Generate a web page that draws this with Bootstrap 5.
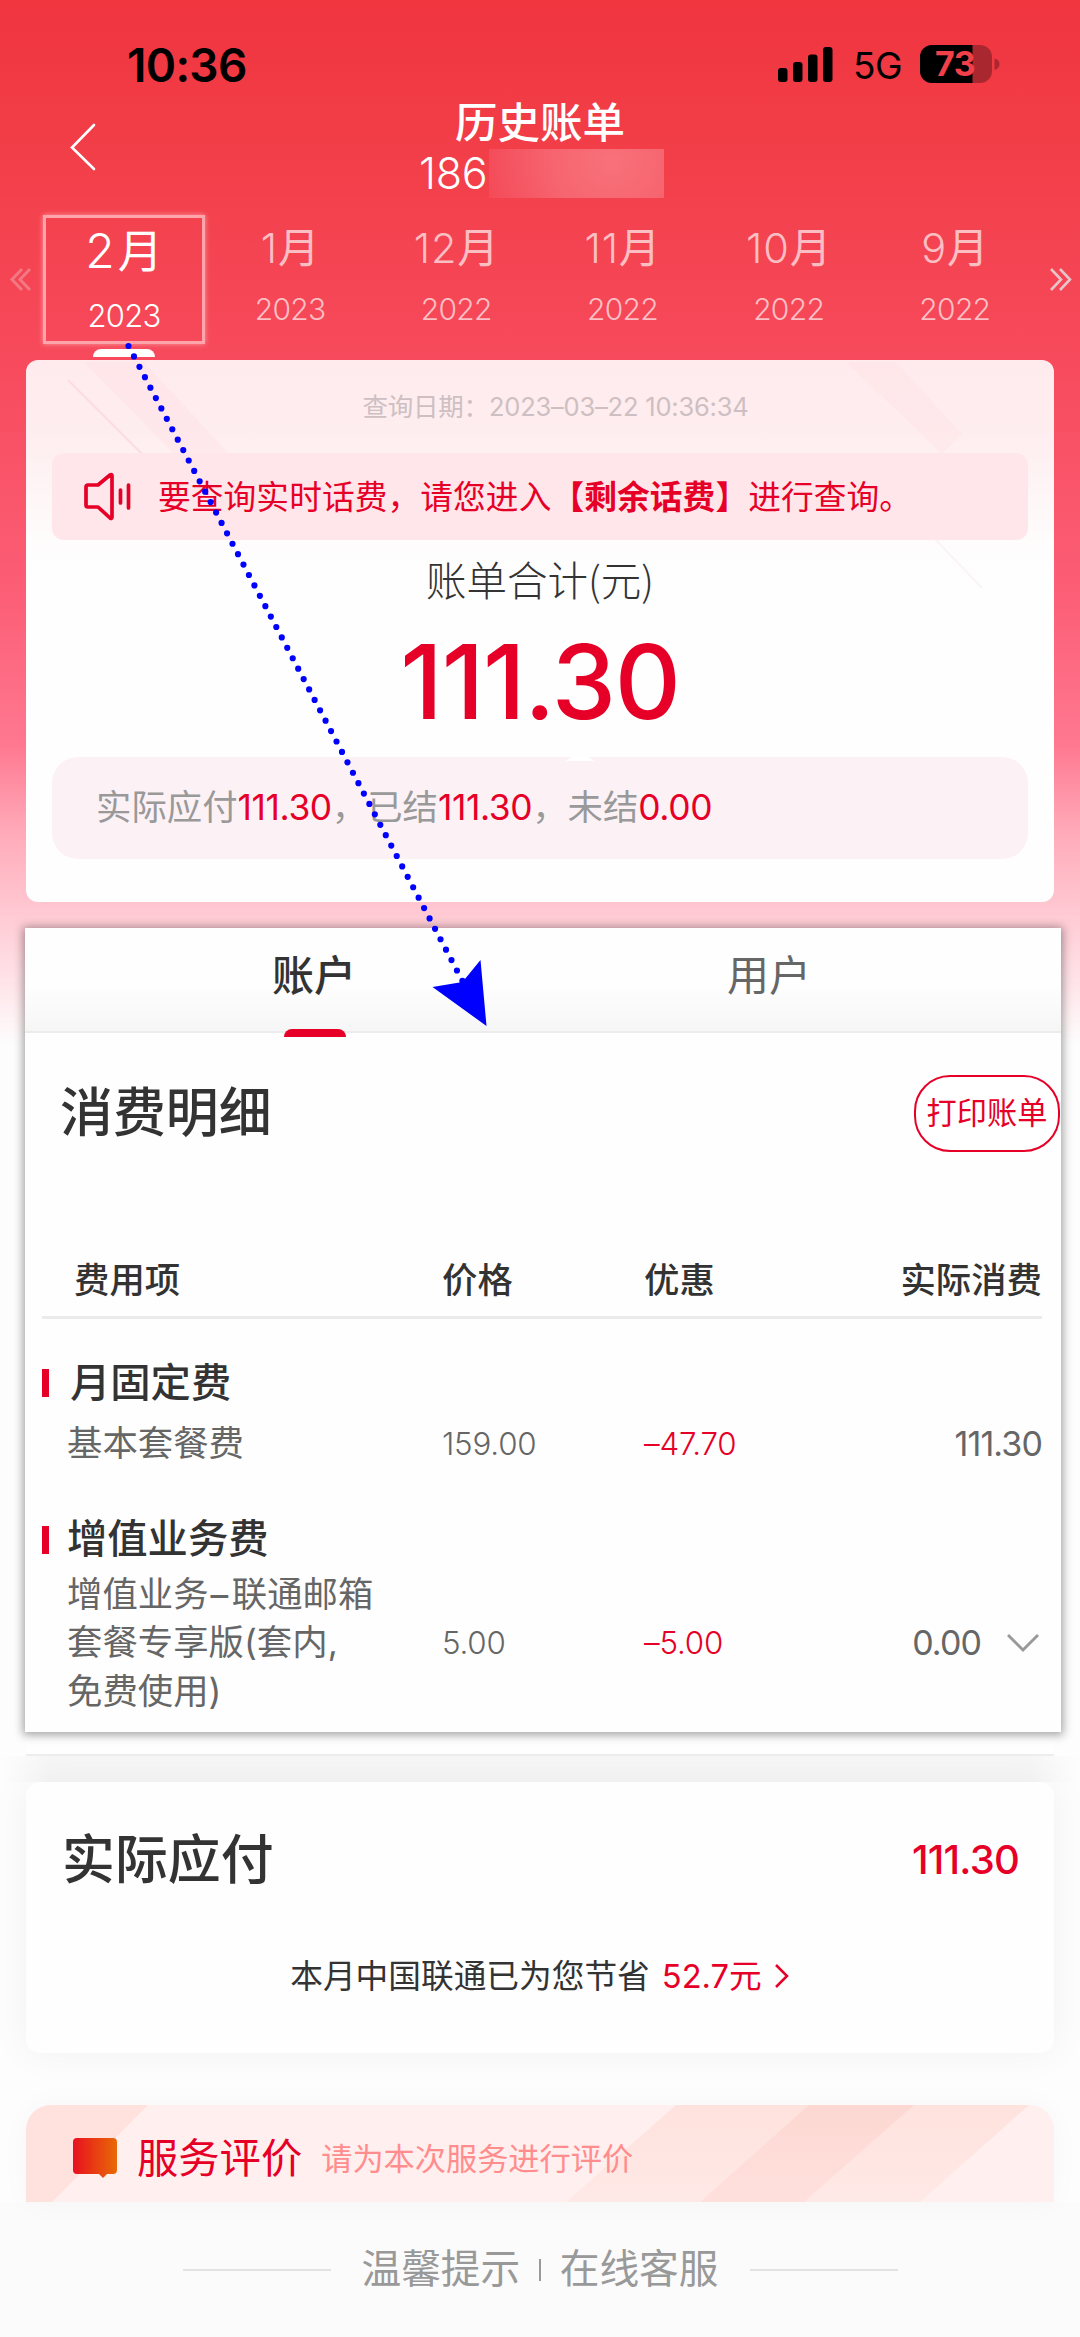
<!DOCTYPE html>
<html lang="zh-CN">
<head>
<meta charset="utf-8">
<meta name="viewport" content="width=device-width, initial-scale=1">
<title>历史账单</title>
<link href="https://cdn.jsdelivr.net/npm/bootstrap@5.3.0/dist/css/bootstrap.min.css" rel="stylesheet">
<style>
:root{--brand:#e60027;--ink:#333;--soft:#666}
body{font-family:Inter,"Noto Sans CJK SC",sans-serif;color:var(--ink);background:#fdfdfd;line-height:1}
.screen{width:1080px;height:2337px;background:linear-gradient(180deg,#f0353f 0,#f23e48 150px,#f74a5c 360px,#fc5f77 600px,#fe7890 745px,#ffa9b8 830px,#ffc8d2 910px,#ffdfe5 970px,#fdfdfd 1045px)}
.cjk{font-family:"Noto Sans CJK SC",sans-serif}
.num{font-family:Inter,sans-serif}
.fw-m{font-weight:500}
.red{color:var(--brand)}
.status{height:92px;padding:0 80px 0 127px;color:#000}
.clock{font-size:46px;font-weight:600;letter-spacing:-.7px;padding-top:42px}
.status-icons{padding-top:37px}
.net{font-size:37px;letter-spacing:-.5px;padding:2px 18px 0 19px}
.titlebar{height:110px;color:#fff}
.page-title{font-size:42.5px;height:57px;line-height:55px}
.back{left:68px;top:30px}
.phone{height:49px;font-size:43px;font-weight:300;padding-left:419px;letter-spacing:-.2px}
.phone-prefix{width:70px;white-space:nowrap}
.mask{width:175px;height:49px;background:radial-gradient(circle at 70% 25%,#f8717a 0,#f66570 45%,#f44a58 100%)}
.months{height:158px;padding:0 41px;color:rgba(255,255,255,.66)}
.month{width:166.2px}
.month .m-name{font-size:41.500px;height:42px;line-height:42px;margin-top:22px;font-family:"Noto Sans CJK SC",sans-serif}
.month .m-name span{font-family:Inter,sans-serif;font-weight:300;letter-spacing:.8px}
.month .m-year{font-size:30px;height:30px;line-height:30px;margin-top:28px;letter-spacing:-.7px;font-weight:300}
.month.active{width:162px;height:129px;margin:13px 2px 0 2px;color:#fff;border:3px solid #fda5ab;box-shadow:0 0 5px #ff9aa2}
.month.active .m-name{font-size:45px;margin-top:10px}
.month.active .m-name span{font-size:48px;letter-spacing:3px;font-weight:300}
.month.active .m-year{margin-top:31px;font-size:31px}
.prev-more{left:9px;top:65px}
.next-more{left:1048px;top:65px}
.mark-tab{left:93px;top:147px;width:62px;height:8px;border-radius:8px 8px 0 0;background:#fff}
.sum{margin:0 26px;height:542px;border-radius:12px;background:linear-gradient(180deg,#ffebed 0,#feedef 70px,#fefdfd 190px,#fefefe 230px);overflow:hidden}
.date{font-size:25.5px;color:#cdbfc2;height:93px;line-height:93px;letter-spacing:-.2px;padding-left:31px}
.notice{margin:0 26px;height:87px;border-radius:12px;background:#ffe6ea;font-size:32.7px;padding-left:31px}
.notice .cjk{margin:-3px 0 0 25px;letter-spacing:.1px}
.lbl{font-size:40.5px;height:44px;line-height:44px;margin-top:17px;font-weight:300}
.total{font-size:102.5px;height:103px;line-height:103px;margin-top:30px;font-weight:500;letter-spacing:-1.2px}
.pill{margin:23px 26px 0;height:102px;border-radius:26px;background:#fcf2f6;padding-left:44px;font-size:35.4px;color:#999}
.pill .red{letter-spacing:-.4px}
.notch{left:514px;top:0;width:28px;height:4px;background:#fff;clip-path:polygon(20% 0,80% 0,100% 100%,0 100%)}
.detail{margin:26px 19px 0 25px;height:804px;background:#fefefe;box-shadow:0 1px 9px 2px rgba(0,0,0,.36)}
.tabs{height:105px;background:linear-gradient(180deg,#fefefe 55%,#f6f6f6 100%);border-bottom:2px solid #ececec;font-size:42px;color:var(--soft)}
.tabs>div{padding-top:27px}
.tab-a{margin-left:247px;width:455px;color:var(--ink)}
.tab-line{left:259px;top:101px;width:62px;height:8px;border-radius:8px 8px 0 0;background:var(--brand)}
.h-big{font-size:52.9px;font-weight:500}
.detail-head{height:161px;padding:0 1px 0 35px;margin-bottom:57px}
.btn-print,.btn-print:hover{width:146px;height:77px;border:2.5px solid var(--brand);border-radius:36px;color:var(--brand);font-size:30.2px;padding:0;background:#fff;white-space:nowrap}
.grid4{display:grid;grid-template-columns:400px 202px 1fr auto;align-items:center}
.thead-row{margin:0 19px 0 17px;height:68px;border-bottom:3px solid #ebebeb;font-size:35.4px;font-weight:500;padding-bottom:5px}
.grp{font-size:40.3px;font-weight:500;height:44px;padding-left:17px}
.bar{width:7px;height:28px;background:var(--brand)}
.item{margin:0 19px 0 17px;font-size:35.4px;color:var(--soft);line-height:48.5px}
.item>span:first-child{padding-left:25px}
.item .num{font-size:31.3px;font-weight:300;letter-spacing:-.2px}
.item .fin{font-size:34px;font-weight:400;letter-spacing:-.9px}
.dash{letter-spacing:3.5px;margin-left:2px}
.strip{margin:0 26px;height:24px;background:#fefefe;border-bottom:2px solid #ededed}
.gapband{height:26px;background:linear-gradient(90deg,#fdfdfd,#f6f6f6 50px,#f6f6f6 1030px,#fdfdfd)}
.due{margin:0 26px;height:271px;border-radius:14px;background:#fefefe;box-shadow:0 0 40px rgba(0,0,0,.05)}
.due-top{height:156px;padding:0 35px 0 36px}
.due-amt{font-size:40px;letter-spacing:-.8px}
.save{font-size:32.7px;height:76px}
.rate{margin:52px 26px 0;height:97px;border-radius:25px 25px 0 0;overflow:hidden;background:#ffefef;box-shadow:0 0 30px rgba(0,0,0,.03)}
.rate-row{padding:10px 0 0 47px}
.rate-title{font-size:41.3px;margin-left:19px}
.rate-sub{font-size:31.2px;margin:3px 0 0 19px;color:#ff8d8d}
.foot{height:135px;background:#fbfbfb;color:#999;font-size:39.7px}
.rule{width:148px;height:2px;background:#e2e2e2}
.sep{width:1.5px;height:22px;background:#999;margin:0 19px}
.over{z-index:5;pointer-events:none}
.art{left:0;top:0}
</style>
<script src="https://cdn.jsdelivr.net/npm/bootstrap@5.3.0/dist/js/bootstrap.bundle.min.js"></script>
</head>
<body>
<main class="screen position-relative overflow-hidden">
  <div class="status d-flex justify-content-between">
    <div class="clock">10:36</div>
    <div class="status-icons d-flex align-items-center">
      <svg width="56" height="36" viewBox="0 0 56 36"><rect y="21" width="9.500" height="14" rx="3"/><rect x="15" y="15" width="9.500" height="20" rx="3"/><rect x="30" y="7.500" width="9.500" height="27.500" rx="3"/><rect x="45" width="9.500" height="35" rx="3"/></svg>
      <span class="net">5G</span>
      <svg width="80" height="40" viewBox="0 0 80 40"><defs><clipPath id="bt"><rect width="72" height="38" rx="12"/></clipPath></defs><g clip-path="url(#bt)"><rect width="72" height="40" fill="#a92830"/><rect width="52.500" height="40"/></g><path d="M74.500 13.500q5 1 5 5.500t-5 6z" fill="#a92830"/><text x="35" y="31" text-anchor="middle" font-family="Inter" font-weight="700" font-size="34" letter-spacing="-.5" fill="#f2404b">73</text></svg>
    </div>
  </div>
  <header class="titlebar position-relative">
    <svg class="back position-absolute" width="30" height="50" fill="none" stroke="#fff" stroke-width="2.600" stroke-linecap="round"><path d="M26 3 4 25.500 26 47"/></svg>
    <div class="page-title cjk fw-m text-center">历史账单</div>
    <div class="phone d-flex align-items-center"><span class="phone-prefix">186</span><span class="mask"></span></div>
  </header>
  <nav class="months d-flex position-relative text-center">
    <div class="month active"><div class="m-name"><span>2</span>月</div><div class="m-year">2023</div></div>
    <div class="month"><div class="m-name"><span>1</span>月</div><div class="m-year">2023</div></div>
    <div class="month"><div class="m-name"><span>12</span>月</div><div class="m-year">2022</div></div>
    <div class="month"><div class="m-name"><span>11</span>月</div><div class="m-year">2022</div></div>
    <div class="month"><div class="m-name"><span>10</span>月</div><div class="m-year">2022</div></div>
    <div class="month"><div class="m-name"><span>9</span>月</div><div class="m-year">2022</div></div>
    <svg class="prev-more position-absolute" width="24" height="26" fill="none" stroke="#f27883" stroke-width="3"><path d="M13 2 3 12.500 13 23M21 2 11 12.500 21 23"/></svg>
    <svg class="next-more position-absolute" width="25" height="26" fill="none" stroke="#e6c4c8" stroke-width="2.600"><path d="m3 2 10 10.500L3 23M12 2l10 10.500L12 23"/></svg>
    <span class="mark-tab position-absolute"></span>
  </nav>
  <section class="sum position-relative">
    <svg class="position-absolute art" width="1028" height="240"><path d="M58 2h60l85 92h-55z" fill="#ffdfe3" opacity=".4"/><path d="m42 20 74 74" stroke="#fcdce1" stroke-width="2"/><path d="M820 2h50l66 72-20 20z" fill="#ffdfe3" opacity=".35"/><path d="m908 178 48 50" stroke="#fbf4f5" stroke-width="2"/></svg>
    <div class="date text-center position-relative">查询日期：2023–03–22 10:36:34</div>
    <div class="notice red d-flex align-items-center position-relative">
      <svg width="50" height="50" fill="none" stroke="#e60027" stroke-width="3.700" stroke-linejoin="round" stroke-linecap="round"><path d="M5 13h10L27 3q2-1 2 1v41q0 2-2 1L15 35H5q-2 0-2-2V15q0-2 2-2zM37.500 18v13M45.500 13v23"/></svg>
      <div class="cjk text-nowrap">要查询实时话费，请您进入<b>【剩余话费】</b>进行查询。</div>
    </div>
    <div class="lbl cjk text-center">账单合计(元)</div>
    <div class="total red text-center">111.30</div>
    <div class="pill d-flex align-items-center position-relative text-nowrap"><span class="notch position-absolute"></span>
      <div>实际应付<span class="red">111.30</span>，已结<span class="red">111.30</span>，未结<span class="red">0.00</span></div>
    </div>
  </section>
  <section class="detail position-relative">
    <div class="tabs d-flex position-relative"><div class="tab-a fw-m">账户</div><div>用户</div><span class="tab-line position-absolute"></span></div>
    <div class="detail-head d-flex justify-content-between align-items-center"><div class="h-big">消费明细</div><button class="btn btn-print">打印账单</button></div>
    <div class="grid4 thead-row"><span class="ps-4"><span class="ps-2">费用项</span></span><span>价格</span><span>优惠</span><span>实际消费</span></div>
    <div class="grp d-flex align-items-center" style="margin-top:42px"><span class="bar"></span><span style="padding-left:21px">月固定费</span></div>
    <div class="grid4 item" style="margin-top:15px"><span>基本套餐费</span><span class="num">159.00</span><span class="num red">–47.70</span><span class="num fin">111.30</span></div>
    <div class="grp d-flex align-items-center" style="margin-top:49px"><span class="bar"></span><span style="padding-left:18px">增值业务费</span></div>
    <div class="grid4 item" style="margin-top:9px"><span>增值业务<span class="dash">–</span>联通邮箱<br>套餐专享版(套内,<br>免费使用)</span><span class="num">5.00</span><span class="num red">–5.00</span><span class="d-flex align-items-center"><span class="num fin">0.00</span><svg style="margin:0 3px 0 26px" width="32" height="20" fill="none" stroke="#999" stroke-width="3"><path d="m1 2 15 15L31 2"/></svg></span></div>
  </section>
  <div class="strip"></div>
  <div class="gapband"></div>
  <section class="due">
    <div class="due-top d-flex justify-content-between align-items-center"><div class="h-big">实际应付</div><div class="due-amt red fw-m">111.30</div></div>
    <div class="save d-flex justify-content-center align-items-center">本月中国联通已为您节省<span class="red" style="margin-left:12px">52.7元</span><svg style="margin-left:12px" width="16" height="26" fill="none" stroke="#e60027" stroke-width="2.500"><path d="m2 2 11 11L2 24"/></svg></div>
  </section>
  <section class="rate position-relative">
    <svg class="position-absolute art" width="1028" height="97"><defs><linearGradient id="fd" x2="0" y2="1"><stop stop-color="#fdd8d2"/><stop offset="1" stop-color="#ffe0dd"/></linearGradient><linearGradient id="fe" x2="0" y2="1"><stop stop-color="#fee2dd"/><stop offset="1" stop-color="#ffe9e6"/></linearGradient></defs><path d="M0 0h122L26 97H0z" fill="#ffe2dd"/><path d="M650 0h353L894 97H540z" fill="url(#fe)"/><path d="M783 0h105L778 97H674z" fill="url(#fd)"/></svg>
    <div class="rate-row d-flex align-items-center position-relative h-100">
      <svg width="45" height="41"><defs><linearGradient id="ic"><stop stop-color="#e8101f"/><stop offset="1" stop-color="#e86a06"/></linearGradient></defs><path d="M4 0h36q4 0 4 4v28q0 4-4 4h-6l-4 4-4-4H4q-4 0-4-4V4q0-4 4-4z" fill="url(#ic)"/></svg>
      <span class="rate-title red">服务评价</span><span class="rate-sub">请为本次服务进行评价</span>
    </div>
  </section>
  <footer class="foot d-flex justify-content-center align-items-center">
    <span class="rule"></span><span style="margin-left:31px">温馨提示</span><span class="sep"></span><span style="margin-right:31px">在线客服</span><span class="rule"></span>
  </footer>
  <svg class="position-absolute art over" width="1080" height="1100"><path d="M128.500 346 463 982" stroke="#00f" stroke-width="6.200" stroke-linecap="round" stroke-dasharray="0 11.760"/><path d="m486.500 1026-54-39 30-5 18-22z" fill="#00f"/></svg>
</main>
</body>
</html>
